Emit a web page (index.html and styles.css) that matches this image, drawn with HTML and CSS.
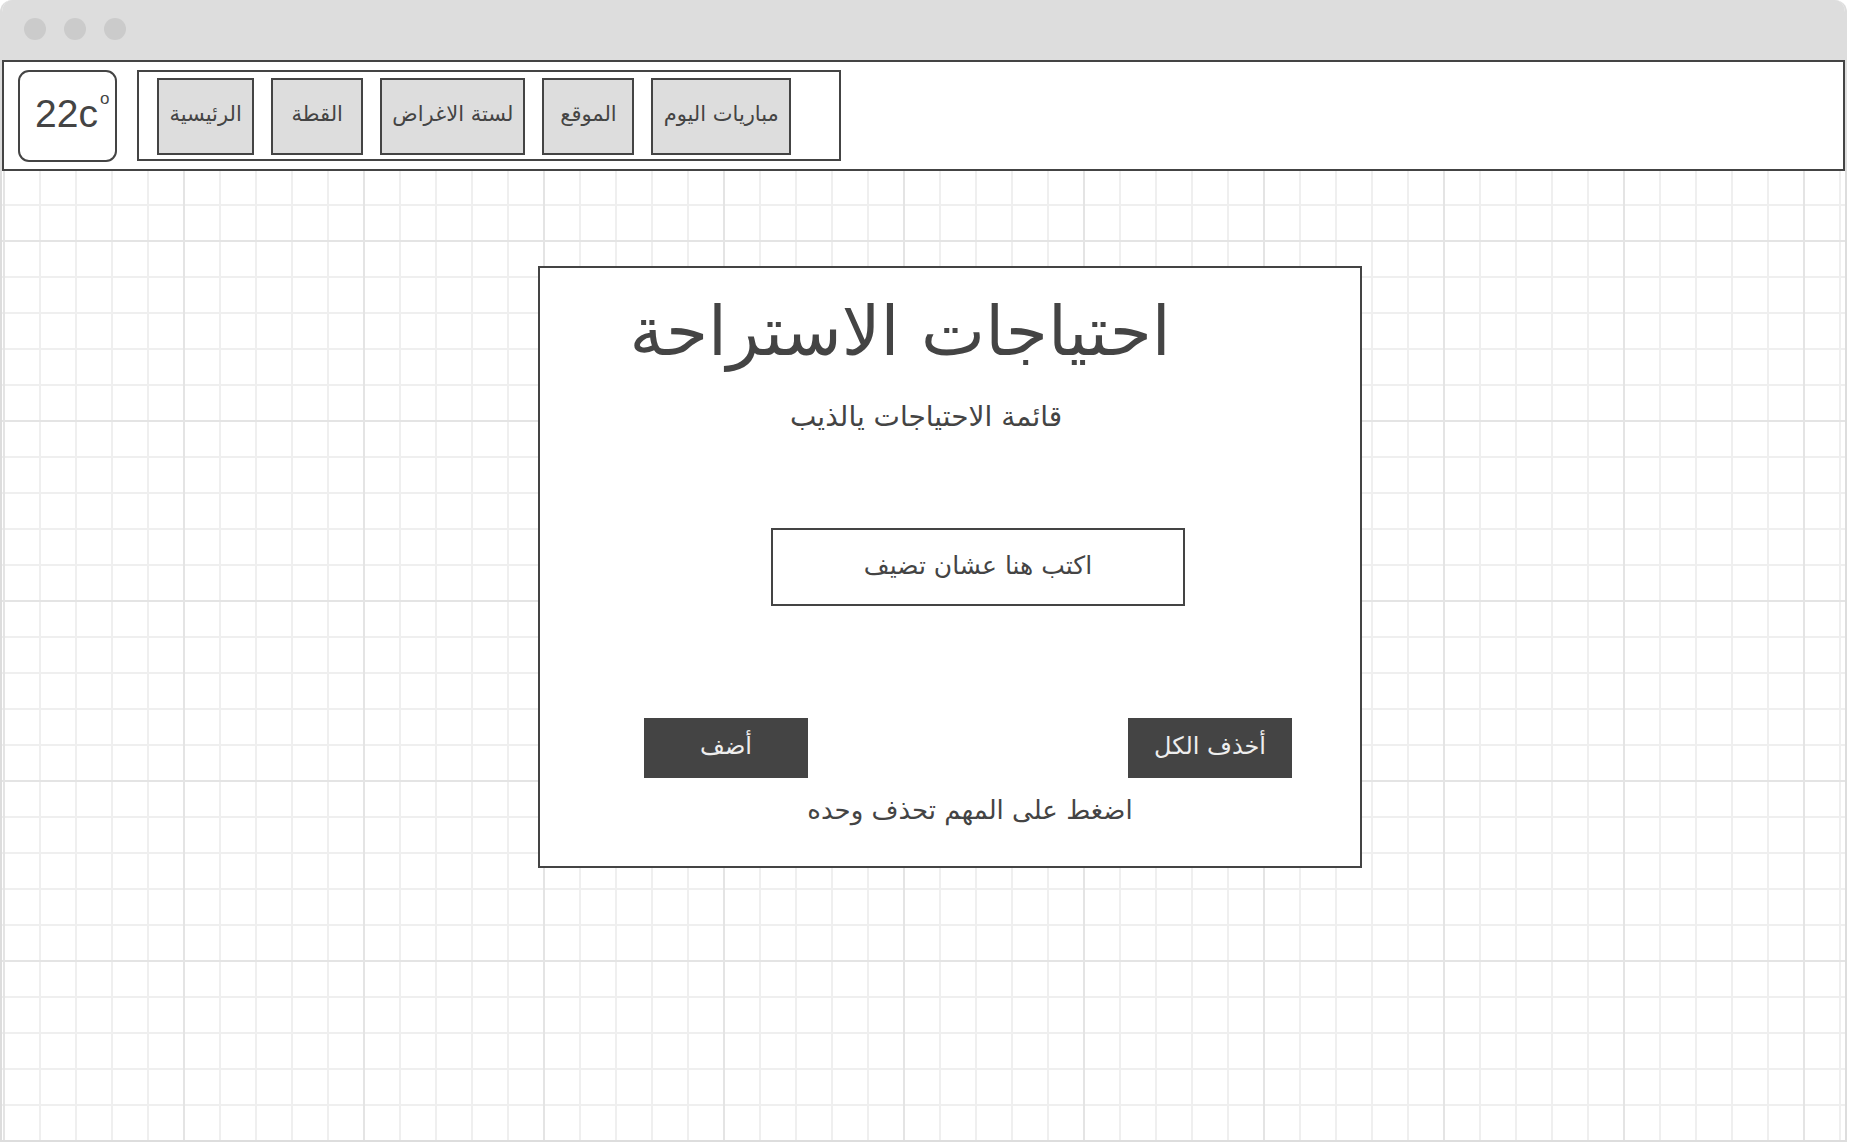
FILE: index.html
```html
<!DOCTYPE html>
<html lang="ar">
<head>
<meta charset="utf-8">
<title>احتياجات الاستراحة</title>
<link rel="stylesheet" href="styles.css">
</head>
<body>
<div class="window">
  <div class="chrome">
    <span class="dot"></span><span class="dot"></span><span class="dot"></span>
  </div>
  <div class="viewport">
    <header class="nav">
      <div class="temp">22c<sup>o</sup></div>
      <ul class="menu" dir="rtl">
        <li class="item">مباريات اليوم</li>
        <li class="item">الموقع</li>
        <li class="item">لستة الاغراض</li>
        <li class="item">القطة</li>
        <li class="item">الرئيسية</li>
      </ul>
    </header>
    <main class="card" dir="rtl">
      <h1 class="title">احتياجات الاستراحة</h1>
      <p class="subtitle">قائمة الاحتياجات يالذيب</p>
      <div class="field">اكتب هنا عشان تضيف</div>
      <div class="actions">
        <button class="btn">أخذف الكل</button>
        <button class="btn">أضف</button>
      </div>
      <p class="hint">اضغط على المهم تحذف وحده</p>
    </main>
  </div>
</div>
</body>
</html>
```

FILE: styles.css
```css
* { box-sizing: border-box; }

html, body {
  margin: 0;
  padding: 0;
  background: #ffffff;
}

body {
  font-family: "DejaVu Sans", "Liberation Sans", sans-serif;
  color: #444444;
}

.window {
  width: 1847px;
  height: 1142px;
  border: 2px solid #dddddd;
  border-top: none;
  border-radius: 12px 12px 0 0;
  overflow: hidden;
  display: flex;
  flex-direction: column;
}

.chrome {
  height: 60px;
  flex: none;
  background: #dddddd;
  display: flex;
  align-items: center;
  gap: 18px;
  padding-left: 22px;
  padding-bottom: 2px;
}

.dot {
  width: 22px;
  height: 22px;
  border-radius: 50%;
  background: #cbcbcb;
}

.viewport {
  flex: 1;
  background-color: #ffffff;
  background-image:
    linear-gradient(to right, #e4e4e4 2px, transparent 2px),
    linear-gradient(to bottom, #e4e4e4 2px, transparent 2px),
    linear-gradient(to right, #efefef 2px, transparent 2px),
    linear-gradient(to bottom, #efefef 2px, transparent 2px);
  background-size: 180px 180px, 180px 180px, 36px 36px, 36px 36px;
  background-position: 1px 0, 1px 0, 1px 0, 1px 0;
}

.nav {
  height: 111px;
  border: 2px solid #444444;
  background: #ffffff;
  display: flex;
  align-items: flex-start;
  gap: 20px;
  padding: 8px 0 0 14px;
}

.temp {
  width: 99px;
  height: 92px;
  border: 2px solid #444444;
  border-radius: 11px;
  display: flex;
  align-items: center;
  padding-left: 15px;
  padding-bottom: 4px;
  font-family: "Liberation Sans", Arial, sans-serif;
  font-size: 39px;
  color: #444444;
}

.temp sup {
  font-size: 17px;
  align-self: flex-start;
  margin-top: 18px;
  margin-left: 2px;
  vertical-align: baseline;
  line-height: 1;
}

.menu {
  list-style: none;
  margin: 0;
  width: 704px;
  height: 91px;
  border: 2px solid #444444;
  display: flex;
  align-items: center;
  gap: 17px;
  padding: 2px 48px 0 18px;
}

.item {
  min-width: 92px;
  height: 77px;
  border: 2px solid #444444;
  background: #dddddd;
  display: flex;
  align-items: center;
  justify-content: center;
  padding: 0 11px 6px;
  font-size: 21px;
  color: #444444;
  white-space: nowrap;
}

.card {
  width: 824px;
  height: 602px;
  margin: 95px 0 0 536px;
  border: 2px solid #444444;
  background: #ffffff;
  display: flex;
  flex-direction: column;
}

.title {
  margin: 24px 100px 0 0;
  font-size: 68px;
  font-weight: normal;
  line-height: 80px;
  text-align: center;
  color: #444444;
}

.subtitle {
  margin: 27px 48px 0 0;
  font-size: 28px;
  line-height: 36px;
  text-align: center;
}

.field {
  width: 414px;
  height: 78px;
  margin: 93px 175px 0 0;
  border: 2px solid #444444;
  display: flex;
  align-items: center;
  justify-content: center;
  padding-bottom: 4px;
  font-size: 25px;
}

.actions {
  margin-top: 112px;
  display: flex;
  justify-content: space-between;
  padding: 0 68px 0 104px;
}

.btn {
  width: 164px;
  height: 60px;
  border: none;
  border-radius: 0;
  background: #444444;
  color: #eeeeee;
  font-family: "DejaVu Sans", sans-serif;
  font-size: 24px;
  padding: 0 0 4px;
}

.hint {
  margin: 14px 0 0 40px;
  font-size: 26px;
  line-height: 36px;
  text-align: center;
}
```
